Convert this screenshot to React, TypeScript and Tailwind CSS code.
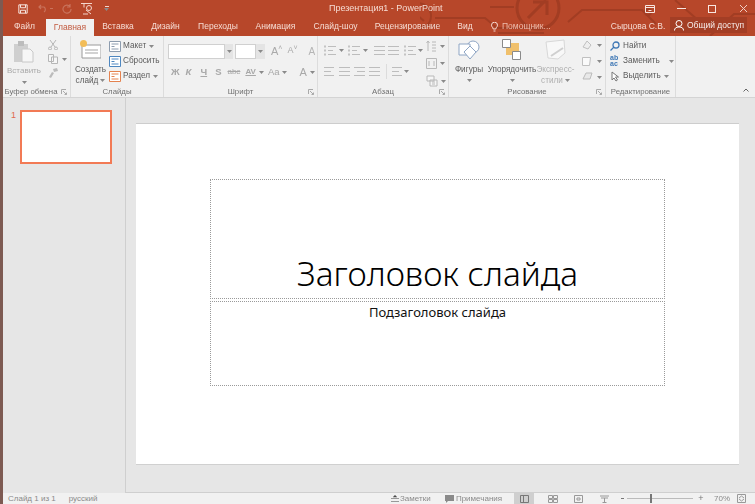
import React from "react";

const Caret = ({ className = "" }: { className?: string }) => (
  <svg width="5" height="3" viewBox="0 0 5 3" className={className}><path d="M0 0h5L2.5 3z" fill="#8a8a8a" /></svg>
);

const Launcher = () => (
  <svg width="6" height="6" viewBox="0 0 6 6" fill="none" stroke="#aaa" strokeWidth="1"><path d="M0.5 5V0.5H5M2 2l3.5 3.5M3.5 5.5h2v-2" /></svg>
);

function Group({ w, label, launcher, children, labelClass = "" }: { w: string; label: string; launcher?: boolean; children: React.ReactNode; labelClass?: string }) {
  return (
    <div className={`${w} h-full relative flex flex-col border-r border-[#dcdcdc]`}>
      <div className="flex-1 flex min-h-0">{children}</div>
      <div className={`h-[10px] flex items-center justify-center text-[7.8px] leading-none text-[#707070] ${labelClass}`}>{label}</div>
      {launcher && <div className="absolute right-[3px] bottom-[2px] flex"><Launcher /></div>}
    </div>
  );
}

const Lines = ({ n = 3, w = 12, dots = false, align = "l" }: { n?: number; w?: number; dots?: boolean; align?: string }) => (
  <svg width={w} height="11" viewBox={`0 0 ${w} 11`} stroke="#bdbdbd" strokeWidth="1">
    {Array.from({ length: n }).map((_, i) => {
      const y = 1.5 + i * (8 / (n - 1));
      const short = align === "l" ? [dots ? 4 : 0, i % 2 ? w - 3 : w] : align === "r" ? [i % 2 ? 3 : 0, w] : [0, w];
      return <line key={i} x1={short[0]} x2={short[1]} y1={y} y2={y} />;
    })}
    {dots && [1.5, 5.5, 9.5].map((y) => <rect key={y} x="0" y={y - 1} width="2" height="2" fill="#c4c4c4" stroke="none" />)}
  </svg>
);

const tabs: [string, string][] = [
  ["Вставка", "ml-[10px] w-[28px]"],
  ["Дизайн", "ml-[20px] w-[27px]"],
  ["Переходы", "ml-[20px] w-[38px]"],
  ["Анимация", "ml-[19px] w-[39px]"],
  ["Слайд-шоу", "ml-[19px] w-[43px]"],
  ["Рецензирование", "ml-[20px] w-[61px]"],
  ["Вид", "ml-[20px] w-[14px]"],
];

export default function App() {
  return (
    <div className="w-[755px] h-[504px] overflow-hidden flex bg-[#e6e6e6] font-['Liberation_Sans',Arial,sans-serif]">
      <div className="w-[3px] h-full bg-[#7d5a52]" />
      <div className="flex-1 flex flex-col min-w-0">
        {/* Title + tabs */}
        <div className="h-[36px] bg-[#b7472a] relative shrink-0 flex flex-col blur-[0.3px]">
          <svg className="absolute left-[417px] top-0" width="335" height="36" viewBox="0 0 335 36" fill="none" stroke="#a23d23" strokeWidth="2">
            <circle cx="-2" cy="16" r="13" />
            <path d="M-2 16l6 5" />
            <path d="M15 18h50l12 10h50" />
            <circle cx="118" cy="8" r="21" strokeWidth="3" />
            <path d="M108 18l18-18M113 2h14v13" strokeWidth="3" />
            <path d="M0 26h20M78 33h46M148 22l14-12h60l14 14M290 36l24-22h21M255 0l32 28M70 7h24" />
            <circle cx="228" cy="12" r="3" />
          </svg>
          <div className="h-[17px] flex items-center relative shrink-0">
            <svg className="ml-[15px]" width="10" height="10" viewBox="0 0 12 12" fill="none" stroke="#f8e6e0" strokeWidth="1.2"><path d="M1 1h10v10H1zM3 1v3.5h6V1M3 11V7.5h6V11" /></svg>
            <svg className="ml-[10px]" width="10" height="9" viewBox="0 0 10 9" fill="none" stroke="#c9735c" strokeWidth="1.2"><path d="M3 1L1 3l2 2M1 3h5a3 3 0 0 1 0 5" /></svg>
            <span className="ml-[2px] w-[3px] h-[1px] bg-[#c9735c]" />
            <svg className="ml-[9px]" width="10" height="10" viewBox="0 0 10 10" fill="none" stroke="#c9735c" strokeWidth="1.2"><path d="M8 2.5A4 4 0 1 0 9 5M8 0v3H5" /></svg>
            <svg className="ml-[8px]" width="13" height="13" viewBox="0 0 13 13" fill="none" stroke="#f4d6cc" strokeWidth="1"><path d="M1 1.5h11M4 1.5v4M9 3.5a2.5 2.5 0 1 0 0 5 2.5 2.5 0 0 0 0-5zM6 8l5 4M3 12h5" /></svg>
            <span className="ml-[11px] flex flex-col gap-[1px] items-center"><span className="w-[4px] h-[1px] bg-[#f4d6cc]" /><Caret /></span>
            <span className="absolute left-[326px] top-[2px] text-[9px] leading-[12px] text-[#f6dcd3] whitespace-nowrap">Презентация1 - PowerPoint</span>
            <div className="absolute right-[7px] top-[3px] h-[11px] flex items-center text-[#f8e6e0]">
              <svg width="10" height="8" viewBox="0 0 10 8" fill="none" stroke="#f8e6e0"><path d="M.5.5h9v7h-9zM.5 2.5h9M3.5 5.5h3" /></svg>
              <span className="ml-[22px] w-[9px] h-[1px] bg-[#f8e6e0]" />
              <span className="ml-[22px] w-[8px] h-[8px] border border-[#f8e6e0]" />
              <svg className="ml-[23px]" width="9" height="9" viewBox="0 0 9 9" stroke="#f0cfc4"><path d="M1 1l7 7M8 1L1 8" /></svg>
            </div>
          </div>
          <div className="flex-1 flex items-stretch relative text-[8.5px] text-[#f6dcd3] whitespace-nowrap">
            <span className="ml-[11px] w-[21px] flex items-center justify-center">Файл</span>
            <span className="ml-[11px] w-[48px] mt-[2px] bg-[#f1f1f1] text-[#c25b40] flex items-center justify-center">Главная</span>
            {tabs.map(([t, c]) => <span key={t} className={`${c} flex items-center justify-center`}>{t}</span>)}
            <svg className="ml-[19px] self-center" width="7" height="10" viewBox="0 0 7 10" fill="none" stroke="#f6dcd3"><path d="M2.2 7C2 5 .5 5 .5 3.2a3 3 0 0 1 6 0C6.500 5 5 5 4.800 7zM2.500 9h2" /></svg>
            <span className="ml-[4px] w-[56px] flex items-center text-[#edbcac]">Помощник...</span>
            <span className="ml-[55px] w-[50px] flex items-center justify-center">Сырцова С.В.</span>
            <span className="ml-[7px] w-[77px] mb-[3px] bg-[#a33e25] flex items-center pl-[4px] gap-[3px] text-white/90">
              <svg width="10" height="11" viewBox="0 0 10 11" fill="none" stroke="#fff"><circle cx="5" cy="3.500" r="3" /><path d="M.5 10.500a4.500 3.500 0 0 1 9 0" /></svg>
              Общий доступ
            </span>
          </div>
        </div>

        {/* Ribbon */}
        <div className="h-[62px] shrink-0 bg-[#f1f1f1] border-b border-[#d4d4d4] flex relative blur-[0.3px] text-[8.2px] text-[#666] whitespace-nowrap">
          <Group w="w-[68px]" label="Буфер обмена" launcher labelClass="pr-[11px]">
            <div className="w-[42px] flex flex-col items-center pt-[4px]">
              <svg width="22" height="23" viewBox="0 0 22 23"><path d="M1 4h14v18H1z" fill="#cfcfcf" /><path d="M5 1h6v5H5z" fill="#bcbcbc" /><path d="M9 9h8l3 3v10H9z" fill="#f6f6f6" stroke="#c8c8c8" /></svg>
              <span className="mt-[3px] text-[8px] leading-[10px] text-[#aaa]">Вставить</span>
              <Caret className="mt-[5px]" />
            </div>
            <div className="flex flex-col gap-[4px] pt-[4px] pl-[3px]">
              <svg width="10" height="10" viewBox="0 0 10 10" fill="none" stroke="#b5b5b5"><path d="M2 0l5 7M8 0L3 7" /><circle cx="2" cy="8.500" r="1.500" /><circle cx="8" cy="8.500" r="1.500" /></svg>
              <span className="flex items-center gap-[4px]"><svg width="10" height="10" viewBox="0 0 10 10" fill="#f6f6f6" stroke="#b5b5b5"><path d="M.5.5h5v7h-5zM3.500 3h6v6.500h-6z" /></svg><Caret /></span>
              <svg width="10" height="10" viewBox="0 0 10 10" fill="#bbb"><path d="M5 1l4-1 1 3-4 1zM1 9l3-5 2 1-3 5z" /></svg>
            </div>
          </Group>

          <Group w="w-[93px]" label="Слайды">
            <div className="w-[37px] ml-[1px] flex flex-col items-center pt-[4px]">
              <svg width="21" height="19" viewBox="0 0 21 19"><path d="M2 5h19v13H2z" fill="#fff" stroke="#9a9a9a" /><path d="M5 10h13M5 13h13" stroke="#a5a5a5" /><circle cx="3.500" cy="3.500" r="3.500" fill="#f2bd58" /></svg>
              <span className="mt-[5px] leading-[11px] text-[#5c5c5c]">Создать</span>
              <span className="leading-[11px] flex items-center gap-[2px] text-[#5c5c5c]">слайд<Caret /></span>
            </div>
            <div className="flex flex-col gap-[3px] pt-[4px] text-[#5c5c5c]">
              {[
                ["Макет", true, "#8d9cae"],
                ["Сбросить", false, "#4e87c0"],
                ["Раздел", true, "#e4824f"],
              ].map(([t, c, col]) => (
                <span key={t as string} className="h-[12px] flex items-center gap-[2px]">
                  <svg width="12" height="11" viewBox="0 0 12 11"><path d="M.5.500h11v10H.5z" fill="#fff" stroke={col as string} /><path d="M2.500 3h7M2.500 5.500h3M2.500 8h7" stroke={col as string} /></svg>
                  {t as string}
                  {c && <Caret className="ml-[1px]" />}
                </span>
              ))}
            </div>
          </Group>

          <Group w="w-[154px]" label="Шрифт" launcher>
            <div className="flex flex-col pl-[4px] pt-[7px]">
              <div className="flex items-center h-[16px]">
                <div className="w-[57px] h-[15px] bg-white border border-[#d0d0d0]" />
                <div className="w-[8px] h-[15px] bg-[#e4e4e4] flex items-center justify-center"><Caret /></div>
                <div className="ml-[2px] w-[21px] h-[15px] bg-white border border-[#d0d0d0]" />
                <div className="w-[9px] h-[15px] bg-[#e4e4e4] flex items-center justify-center"><Caret /></div>
                <span className="ml-[6px] text-[11px] text-[#aaa]">A</span><span className="text-[7px] text-[#aaa] mb-[6px]">˄</span>
                <span className="ml-[5px] text-[9px] text-[#aaa]">A</span><span className="text-[7px] text-[#aaa] mb-[6px]">˅</span>
                <span className="ml-[11px] text-[10px] text-[#b5b5b5]">A</span>
              </div>
              <div className="flex items-center h-[14px] mt-[6px] text-[9.5px] text-[#a8a8a8] font-semibold">
                <span className="ml-[3px]">Ж</span>
                <span className="ml-[6px] italic">К</span>
                <span className="ml-[9px] underline">Ч</span>
                <span className="ml-[8px]">S</span>
                <span className="ml-[6px] text-[8px] line-through font-normal">abc</span>
                <span className="ml-[5px] text-[8px] underline">AV</span><Caret className="ml-[3px]" />
                <span className="ml-[4px] font-normal">Aa</span><Caret className="ml-[2px]" />
                <span className="ml-[13px] text-[11px] font-normal">A</span><Caret className="ml-[3px]" />
              </div>
            </div>
          </Group>

          <Group w="w-[131px]" label="Абзац" launcher>
            <div className="flex flex-col pl-[6px] pt-[8px]">
              <div className="flex items-center h-[12px]">
                <Lines dots w={12} /><Caret className="ml-[3px]" />
                <span className="ml-[4px]"><Lines dots w={12} /></span><Caret className="ml-[3px]" />
                <span className="ml-[6px]"><Lines w={11} align="c" /></span>
                <span className="ml-[3px]"><Lines w={11} align="c" /></span>
                <span className="ml-[5px]"><Lines dots w={12} /></span><Caret className="ml-[2px]" />
              </div>
              <div className="flex items-center h-[12px] mt-[9px]">
                <Lines w={10} />
                <span className="ml-[5px]"><Lines w={11} align="c" /></span>
                <span className="ml-[4px]"><Lines w={11} align="r" /></span>
                <span className="ml-[4px]"><Lines w={11} align="c" /></span>
                <span className="ml-[6px] w-[1px] h-[15px] bg-[#dcdcdc]" />
                <span className="ml-[5px]"><Lines w={10} /></span><Caret className="ml-[2px]" />
              </div>
            </div>
            <div className="flex flex-col ml-[3px] pt-[4px] gap-[6px]">
              <span className="flex items-center gap-[3px]"><svg width="11" height="12" viewBox="0 0 11 12" stroke="#b8b8b8" fill="none"><path d="M2 1v10M.5 3L2 1l1.500 2M6 2h4M6 5h4M6 8h4M6 11h4" /></svg><Caret /></span>
              <span className="flex items-center gap-[3px]"><svg width="11" height="11" viewBox="0 0 11 11" stroke="#b8b8b8" fill="none"><path d="M.5.500h10v10H.5zM3 3v5M8 3v5" /></svg><Caret /></span>
              <span className="flex items-center gap-[3px]"><svg width="12" height="12" viewBox="0 0 12 12" stroke="#b8b8b8" fill="#f6f6f6"><path d="M1 1h7v5H1zM4 5h7v6H4zM6 7h3M6 9h3" /></svg><Caret /></span>
            </div>
          </Group>

          <Group w="w-[157px]" label="Рисование" launcher>
            <div className="w-[36px] ml-[2px] flex flex-col items-center pt-[4px] text-[#5c5c5c]">
              <svg width="22" height="20" viewBox="0 0 22 20" fill="#fff" stroke="#8ea5c4"><circle cx="15" cy="7" r="6" /><path d="M1 4h11v11H1z" /><path d="M12 6l6 6-6 7-6-7z" /></svg>
              <span className="mt-[4px] leading-[11px]">Фигуры</span>
              <Caret className="mt-[4px]" />
            </div>
            <div className="w-[50px] flex flex-col items-center pt-[3px] text-[#5c5c5c]">
              <svg width="20" height="21" viewBox="0 0 20 21"><path d="M4 4h13v12H4z" fill="#f0c06c" /><path d="M.5.500h8v8h-8zM10.500 12.500h8v8h-8z" fill="#fff" stroke="#8a8a8a" /></svg>
              <span className="mt-[4px] leading-[11px]">Упорядочить</span>
              <Caret className="mt-[4px]" />
            </div>
            <div className="w-[37px] flex flex-col items-center pt-[3px] text-[#b0b0b0]">
              <svg width="21" height="21" viewBox="0 0 21 21"><path d="M1 3l18-2 1 13-7 6-10-1z" fill="#f8f8f8" stroke="#d8d8d8" /><path d="M6 17l12-8" stroke="#cfcfcf" strokeWidth="2" /></svg>
              <span className="mt-[4px] leading-[11px]">Экспресс-</span>
              <span className="leading-[11px] flex items-center gap-[2px]">стили<Caret /></span>
            </div>
            <div className="flex flex-col ml-[8px] pt-[4px] gap-[6px]">
              <span className="flex items-center gap-[4px]"><svg width="11" height="10" viewBox="0 0 11 10" fill="#eee" stroke="#c0c0c0"><path d="M5 1l4 4-3 4-5-2z" /></svg><Caret /></span>
              <span className="flex items-center gap-[4px]"><svg width="11" height="10" viewBox="0 0 11 10" fill="#fafafa" stroke="#c0c0c0"><path d="M.5 1.500h8l-1 8h-7z" /></svg><Caret /></span>
              <span className="flex items-center gap-[4px]"><svg width="11" height="10" viewBox="0 0 11 10" fill="#e8e8e8" stroke="#bbb"><path d="M1 7l3-6h6L8 7z" /></svg><Caret /></span>
            </div>
          </Group>

          <Group w="w-[70px]" label="Редактирование">
            <div className="flex flex-col pl-[4px] pt-[4px] gap-[3px] text-[#5c5c5c]">
              <span className="h-[12px] flex items-center gap-[3px]"><svg width="10" height="10" viewBox="0 0 10 10" fill="none" stroke="#3f78b5" strokeWidth="1.300"><circle cx="6" cy="4" r="3" /><path d="M4 6L.5 9.500" /></svg>Найти</span>
              <span className="h-[12px] flex items-center gap-[3px]"><span className="text-[7px] leading-[6px] text-[#3f78b5] font-semibold w-[10px]">ab<br />ac</span>Заменить<Caret className="ml-[6px]" /></span>
              <span className="h-[12px] flex items-center gap-[3px]"><span className="w-[10px] flex justify-end"><svg width="9" height="11" viewBox="0 0 9 11" fill="#fff" stroke="#777"><path d="M1 1v8l2-2 2 3 1.500-1-2-3h3z" /></svg></span>Выделить<Caret /></span>
            </div>
          </Group>
          <svg className="absolute right-[6px] bottom-[5px]" width="6" height="4" viewBox="0 0 6 4" fill="none" stroke="#666"><path d="M.5 3.500L3 1l2.500 2.500" /></svg>
        </div>

        {/* Workspace */}
        <div className="flex-1 flex min-h-0">
          <div className="w-[123px] shrink-0 border-r border-[#cfcfcf] flex pl-[8px] pt-[12px] gap-[3px]">
            <span className="w-[6px] shrink-0 text-[9px] leading-[11px] text-[#e0684f]">1</span>
            <div className="w-[92px] h-[54px] bg-white border-2 border-[#f27a55]" />
          </div>
          <div className="flex-1 border-b border-[#cfcfcf] pl-[10px] pt-[25px] bg-[#e6e6e6]">
            <div className="w-[603px] h-[341px] bg-white border-t border-[#cdcdcd] shadow-[0_1px_0_#d0d0d0] flex flex-col items-center pt-[55px] font-['Noto_Sans',sans-serif]">
              <div className="w-[455px] h-[120px] border border-dotted border-[#9a9a9a] flex items-end justify-center text-[33.4px] leading-[44px] font-light text-black pb-[3px]">
                Заголовок слайда
              </div>
              <div className="w-[455px] h-[85px] mt-[2px] border border-dotted border-[#9a9a9a] flex justify-center text-[13px] leading-[18px] pt-[1px] text-[#111]">
                Подзаголовок слайда
              </div>
            </div>
          </div>
        </div>

        {/* Status bar */}
        <div className="h-[11px] shrink-0 bg-[#f1f1f1] flex items-center text-[8px] text-[#8a8a8a] whitespace-nowrap blur-[0.3px]">
          <span className="ml-[5px]">Слайд 1 из 1</span>
          <span className="ml-[13px]">русский</span>
          <div className="ml-auto w-[364px] h-full flex items-center">
            <svg className="shrink-0" width="8" height="7" viewBox="0 0 8 7" stroke="#999"><path d="M0 3.500h8M0 6.500h8M4 0l-2 2h4z" /></svg>
            <span className="ml-[1px] w-[30px] text-center">Заметки</span>
            <svg className="ml-[15px] shrink-0" width="9" height="8" viewBox="0 0 9 8" fill="#8a8a8a"><path d="M0 0h9v6H3L1 8V6H0z" /></svg>
            <span className="ml-[1px] w-[48px] text-center">Примечания</span>
            <span className="ml-[11px] w-[20px] h-full bg-[#cfcfcf] flex items-center justify-center"><svg width="9" height="8" viewBox="0 0 9 8" fill="none" stroke="#777"><path d="M.5.500h8v7h-8zM3.500.500v7" /></svg></span>
            <svg className="ml-[14px] shrink-0" width="10" height="8" viewBox="0 0 10 8" fill="none" stroke="#999"><path d="M.5.500h4v3h-4zM5.500.500h4v3h-4zM.5 4.500h4v3h-4zM5.500 4.500h4v3h-4z" /></svg>
            <svg className="ml-[16px] shrink-0" width="9" height="8" viewBox="0 0 9 8" fill="none" stroke="#999"><path d="M.5.500h8v7h-8zM3 3h3v2H3z" /></svg>
            <svg className="ml-[17px] shrink-0" width="9" height="8" viewBox="0 0 9 8" fill="none" stroke="#999"><path d="M0 1h9M1 3h7M4.500 3v5M2.500 7.500h4" /></svg>
            <span className="ml-[12px] w-[3px] h-[1px] bg-[#777]" />
            <span className="ml-[3px] w-[66px] h-[1px] bg-[#bbb] relative"><span className="absolute left-[23px] -top-[4px] w-[2px] h-[9px] bg-[#777]" /></span>
            <span className="ml-[5px] w-[6px] text-center text-[9px] leading-none text-[#777]">+</span>
            <span className="ml-[10px] w-[14px] text-center">70%</span>
            <svg className="ml-[9px] shrink-0" width="9" height="9" viewBox="0 0 9 9" fill="none" stroke="#999"><path d="M.5.500h8v8h-8zM2 4l2.500-2L7 4M2 5l2.500 2L7 5" /></svg>
          </div>
        </div>
      </div>
    </div>
  );
}
